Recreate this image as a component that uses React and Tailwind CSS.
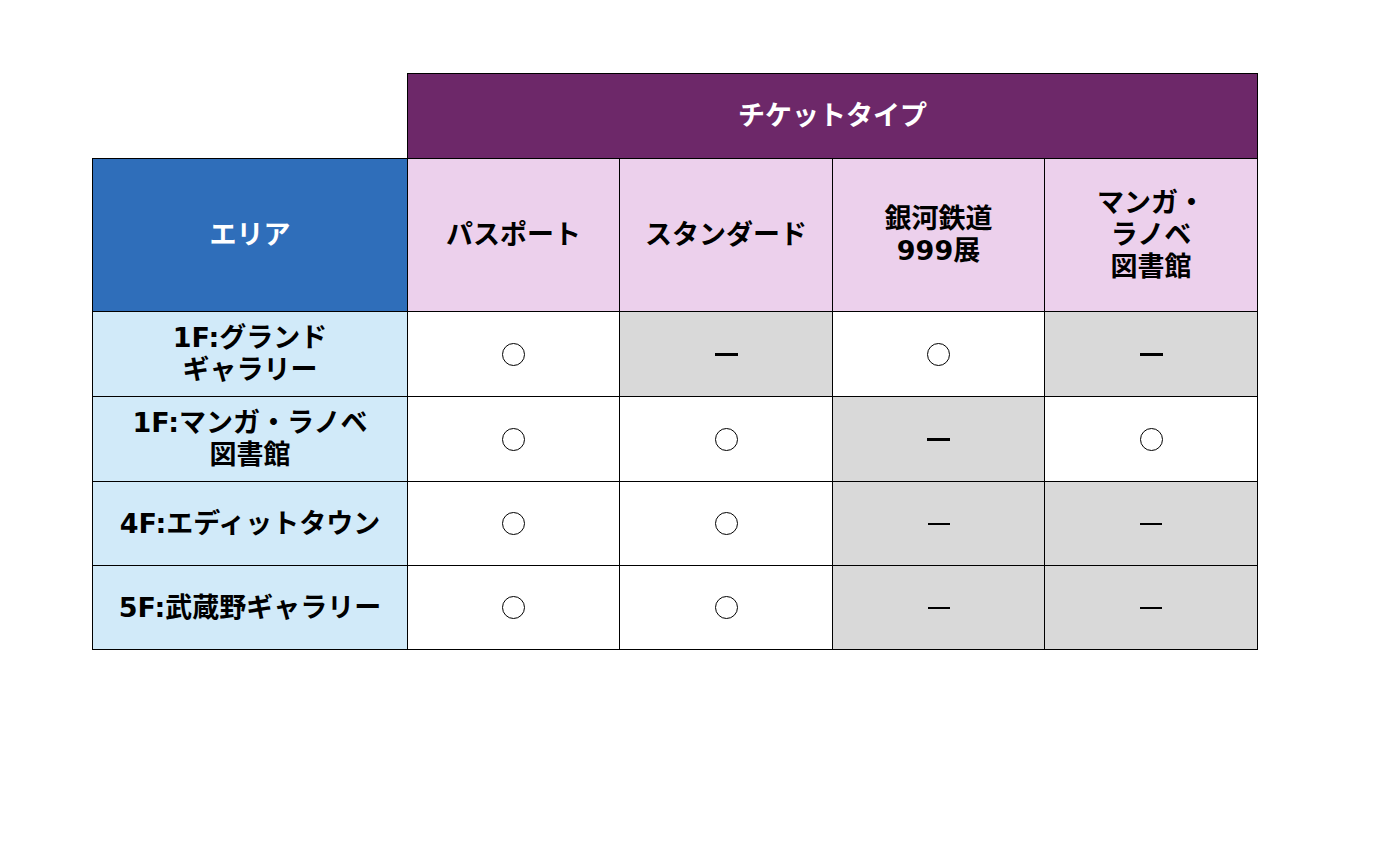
import React from "react";

const FONT = { fontFamily: '"DejaVu Sans", "Noto Sans CJK JP", sans-serif' };

const columns = ["パスポート", "スタンダード", ["銀河鉄道", "999展"], ["マンガ・", "ラノベ", "図書館"]];

// o = available, x = not available (bold dash), d = not available (thin dash)
const rows = [
  { area: ["1F:グランド", "ギャラリー"], cells: ["o", "x", "o", "x"] },
  { area: ["1F:マンガ・ラノベ", "図書館"], cells: ["o", "o", "x", "o"] },
  { area: ["4F:エディットタウン"], cells: ["o", "o", "d", "d"] },
  { area: ["5F:武蔵野ギャラリー"], cells: ["o", "o", "d", "d"] },
];

const Lines = ({ lines }) =>
  (Array.isArray(lines) ? lines : [lines]).map((l, i) => <div key={i}>{l}</div>);

const Mark = ({ type }) => {
  if (type === "o") return <div className="w-[23px] h-[23px] rounded-full border-[1.5px] border-black mx-auto" />;
  if (type === "x") return <div className="w-[23px] h-[3px] bg-black mx-auto" />;
  return <div className="w-[22px] h-[2px] bg-black mx-auto" />;
};

export default function App() {
  return (
    <div className="w-[1376px] h-[860px] bg-white pt-[73px] pl-[92px]" style={FONT}>
      <table className="border-collapse table-fixed text-[27px] font-bold leading-[32px] text-center">
        <colgroup>
          <col className="w-[315px]" />
          <col className="w-[212px]" />
          <col className="w-[213px]" />
          <col className="w-[212px]" />
          <col className="w-[213px]" />
        </colgroup>
        <tbody>
          <tr className="h-[85px]">
            <td className="p-0" />
            <td colSpan={4} className="p-0 bg-[#6d2869] text-white border-[1.5px] border-black">
              チケットタイプ
            </td>
          </tr>
          <tr className="h-[153px]">
            <td className="p-0 bg-[#2f6eba] text-white border-[1.5px] border-black">エリア</td>
            {columns.map((c, i) => (
              <td key={i} className="p-0 bg-[#ecd0ec] text-black border-[1.5px] border-black">
                <Lines lines={c} />
              </td>
            ))}
          </tr>
          {rows.map((r, ri) => (
            <tr key={ri} className={ri < 2 ? "h-[85px]" : "h-[84px]"}>
              <td className="p-0 bg-[#d1eaf9] text-black border-[1.5px] border-black">
                <Lines lines={r.area} />
              </td>
              {r.cells.map((c, ci) => (
                <td
                  key={ci}
                  className={`p-0 border-[1.5px] border-black ${c === "o" ? "bg-white" : "bg-[#d9d9d9]"}`}
                >
                  <Mark type={c} />
                </td>
              ))}
            </tr>
          ))}
        </tbody>
      </table>
    </div>
  );
}
